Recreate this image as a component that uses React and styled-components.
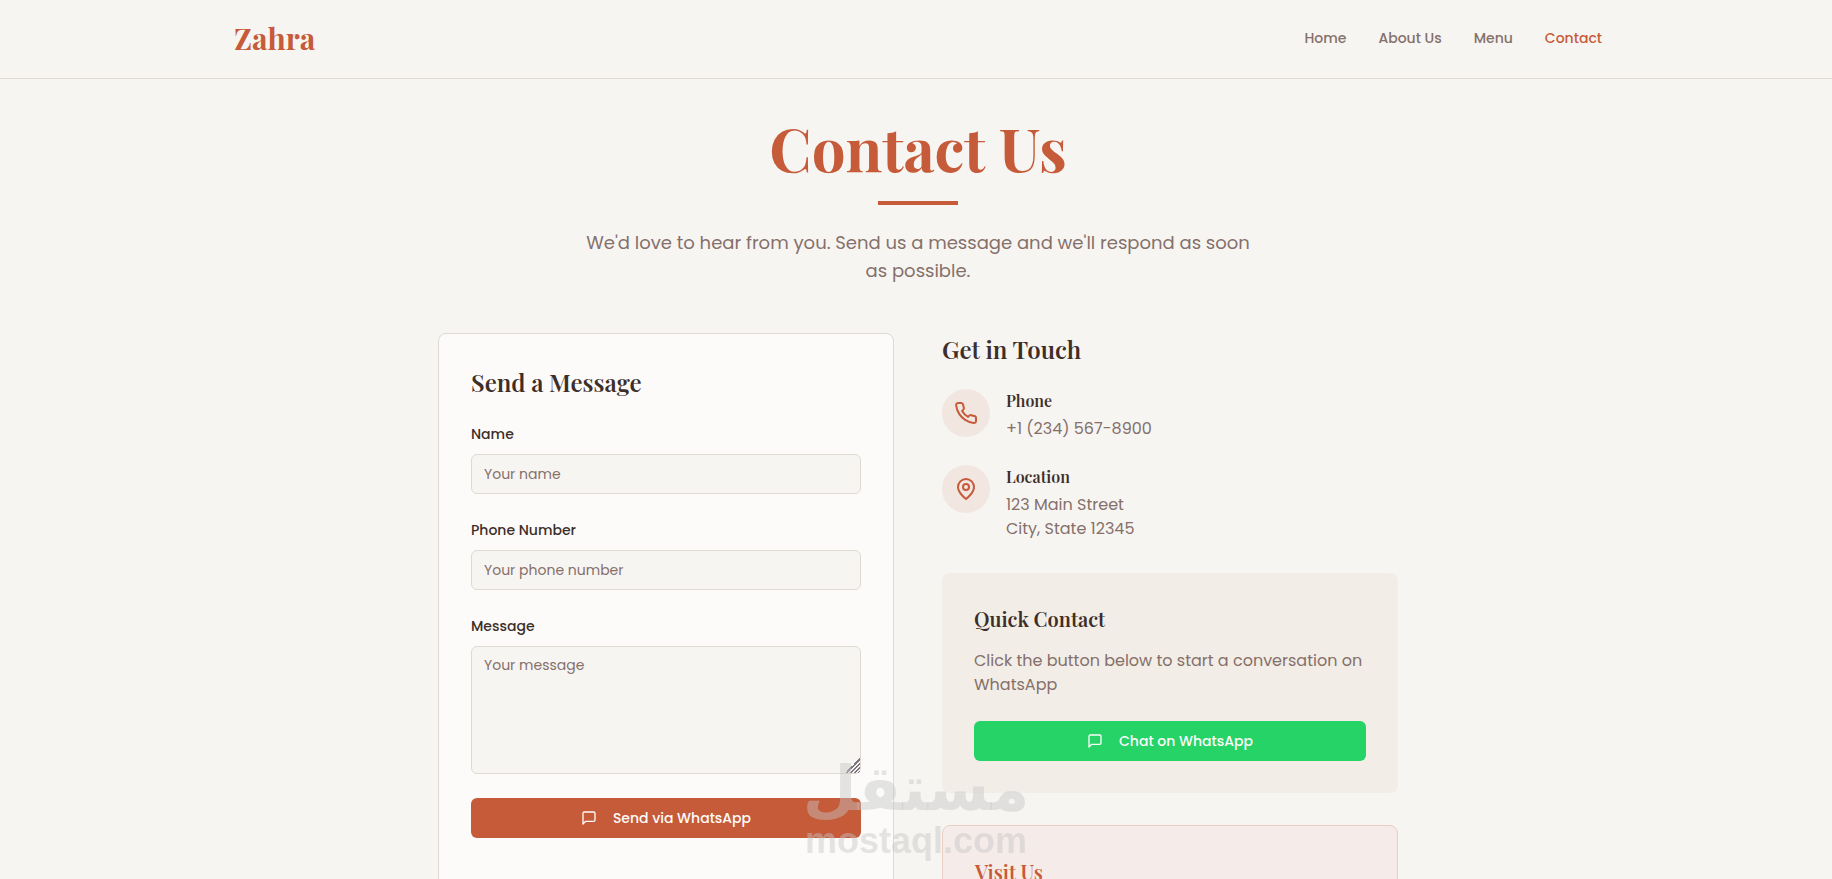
import { useState } from "react";
import styled, { createGlobalStyle } from "styled-components";

const links = ["Home", "About Us", "Menu", "Contact"];

function Icon({ size, children }) {
    return (
        <svg
            width={size}
            height={size}
            viewBox="0 0 24 24"
            fill="none"
            stroke="currentColor"
            strokeWidth="2"
            strokeLinecap="round"
            strokeLinejoin="round"
            aria-hidden="true"
        >
            {children}
        </svg>
    )
}

function MessageIcon() {
    return (
        <Icon size={16}>
            <path d="M21 15a2 2 0 0 1-2 2H7l-4 4V5a2 2 0 0 1 2-2h14a2 2 0 0 1 2 2z" />
        </Icon>
    )
}

function PhoneIcon() {
    return (
        <Icon size={24}>
            <path d="M22 16.92v3a2 2 0 0 1-2.18 2 19.79 19.79 0 0 1-8.63-3.07 19.5 19.5 0 0 1-6-6 19.79 19.79 0 0 1-3.07-8.67A2 2 0 0 1 4.11 2h3a2 2 0 0 1 2 1.72 12.84 12.84 0 0 0 .7 2.81 2 2 0 0 1-.45 2.11L8.09 9.91a16 16 0 0 0 6 6l1.27-1.27a2 2 0 0 1 2.11-.45 12.84 12.84 0 0 0 2.81.7A2 2 0 0 1 22 16.92z" />
        </Icon>
    )
}

function PinIcon() {
    return (
        <Icon size={24}>
            <path d="M20 10c0 6-8 12-8 12s-8-6-8-12a8 8 0 0 1 16 0Z" />
            <circle cx="12" cy="10" r="3" />
        </Icon>
    )
}

export default function App() {
    const [name, setName] = useState("");
    const [phone, setPhone] = useState("");
    const [message, setMessage] = useState("");

    return (
        <>
            <GlobalStyle />
            <Header>
                <HeaderContent>
                    <Logo href="#home">Zahra</Logo>
                    <Nav>
                        {links.map((link) => (
                            <NavLink key={link} href="#" $active={link === "Contact"}>{link}</NavLink>
                        ))}
                    </Nav>
                </HeaderContent>
            </Header>
            <Main>
                <Title>Contact Us</Title>
                <Divider />
                <Subtitle>
                    We'd love to hear from you. Send us a message and we'll respond as soon as possible.
                </Subtitle>
                <Columns>
                    <FormCard onSubmit={(e) => e.preventDefault()}>
                        <SectionTitle>Send a Message</SectionTitle>
                        <Field>
                            <Label htmlFor="name">Name</Label>
                            <Input
                                id="name"
                                value={name}
                                onChange={(e) => setName(e.target.value)}
                                placeholder="Your name"
                            />
                        </Field>
                        <Field>
                            <Label htmlFor="phone">Phone Number</Label>
                            <Input
                                id="phone"
                                type="tel"
                                value={phone}
                                onChange={(e) => setPhone(e.target.value)}
                                placeholder="Your phone number"
                            />
                        </Field>
                        <Field>
                            <Label htmlFor="message">Message</Label>
                            <TextArea
                                id="message"
                                value={message}
                                onChange={(e) => setMessage(e.target.value)}
                                placeholder="Your message"
                            />
                        </Field>
                        <Button type="submit">
                            <MessageIcon />
                            Send via WhatsApp
                        </Button>
                    </FormCard>
                    <Info>
                        <SectionTitle>Get in Touch</SectionTitle>
                        <Items>
                            <Item>
                                <IconCircle><PhoneIcon /></IconCircle>
                                <div>
                                    <ItemTitle>Phone</ItemTitle>
                                    <Text>+1 (234) 567-8900</Text>
                                </div>
                            </Item>
                            <Item>
                                <IconCircle><PinIcon /></IconCircle>
                                <div>
                                    <ItemTitle>Location</ItemTitle>
                                    <Text>123 Main Street<br />City, State 12345</Text>
                                </div>
                            </Item>
                        </Items>
                        <QuickCard>
                            <CardTitle>Quick Contact</CardTitle>
                            <Text>Click the button below to start a conversation on WhatsApp</Text>
                            <Button type="button" $whatsapp>
                                <MessageIcon />
                                Chat on WhatsApp
                            </Button>
                        </QuickCard>
                        <VisitCard>
                            <CardTitle $accent>Visit Us</CardTitle>
                        </VisitCard>
                    </Info>
                </Columns>
            </Main>
            <Watermark>
                <ArabicName lang="ar">مستقل</ArabicName>
                <LatinName>mostaql.com</LatinName>
            </Watermark>
        </>
    );
}

const serif = `"Playfair Display", "Liberation Serif", serif`;
const sans = `Poppins, Inter, sans-serif`;

const GlobalStyle = createGlobalStyle`
    * {
        box-sizing: border-box;
        margin: 0;
    }
    body {
        background-color: #f7f5f2;
        color: #3d2e29;
        font-family: ${sans};
        font-size: 16px;
        line-height: 24px;
    }
    button, input, textarea {
        font-family: inherit;
    }
`
const Header = styled.header`
    padding: 16px 16px 18px 20px;
    border-bottom: 1px solid #e0d9d1;
`
const HeaderContent = styled.div`
    max-width: 1368px;
    min-height: 44px;
    margin: 0 auto;
    display: flex;
    align-items: center;
    justify-content: space-between;
`
const Logo = styled.a`
    font-family: ${serif};
    font-size: 30px;
    line-height: 36px;
    font-weight: 700;
    color: #c65b3a;
    text-decoration: none;
`
const Nav = styled.nav`
    display: flex;
    gap: 32px;
`
const NavLink = styled.a`
    font-size: 14px;
    line-height: 20px;
    font-weight: 500;
    color: ${(props) => (props.$active ? "#c65b3a" : "#85706a")};
    text-decoration: none;
`
const Main = styled.main`
    padding: 38px 16px 64px 20px;
    display: flex;
    flex-direction: column;
    align-items: center;
`
const Title = styled.h1`
    font-family: ${serif};
    font-size: 60px;
    line-height: 60px;
    font-weight: 700;
    color: #c65b3a;
`
const Divider = styled.div`
    width: 80px;
    height: 4px;
    margin: 24px 0;
    background-color: #c65b3a;
`
const Subtitle = styled.p`
    max-width: 672px;
    font-size: 18px;
    line-height: 28px;
    text-align: center;
    color: #85706a;
`
const Columns = styled.div`
    width: 100%;
    max-width: 960px;
    margin-top: 48px;
    display: grid;
    grid-template-columns: 1fr 1fr;
    gap: 48px;
`
const FormCard = styled.form`
    padding: 32px;
    display: flex;
    flex-direction: column;
    gap: 24px;
    background-color: #fcfbf9;
    border: 1px solid #e0d9d1;
    border-radius: 8px;
`
const SectionTitle = styled.h2`
    font-family: ${serif};
    font-size: 24px;
    line-height: 32px;
    font-weight: 600;
`
const Field = styled.div`
    display: flex;
    flex-direction: column;
    gap: 8px;
`
const Label = styled.label`
    font-size: 14px;
    font-weight: 500;
`
const Input = styled.input`
    width: 100%;
    height: 40px;
    padding: 8px 12px;
    font-size: 14px;
    line-height: 20px;
    color: #3d2e29;
    background-color: #f7f5f2;
    border: 1px solid #e0d9d1;
    border-radius: 6px;

    &::placeholder {
        color: #85706a;
    }
`
const TextArea = styled(Input).attrs({ as: "textarea" })`
    height: 128px;
    display: block;
    resize: vertical;

    &::-webkit-resizer {
        background: linear-gradient(
            135deg,
            transparent 50%,
            #7d7480 50% 57%,
            transparent 57% 64%,
            #7d7480 64% 71%,
            transparent 71% 78%,
            #7d7480 78% 85%,
            transparent 85% 91%,
            #7d7480 91% 96%,
            transparent 96%
        );
    }
`
const Button = styled.button`
    width: 100%;
    height: 40px;
    display: flex;
    align-items: center;
    justify-content: center;
    gap: 16px;
    font-size: 14px;
    line-height: 20px;
    font-weight: 500;
    color: #fcfbf9;
    background-color: ${(props) => (props.$whatsapp ? "#25d366" : "#c65b3a")};
    border: none;
    border-radius: 6px;
    cursor: pointer;
`
const Info = styled.div`
    display: flex;
    flex-direction: column;
`
const Items = styled.div`
    margin: 24px 0 32px;
    display: flex;
    flex-direction: column;
    gap: 24px;
`
const Item = styled.div`
    display: flex;
    align-items: flex-start;
    gap: 16px;
`
const IconCircle = styled.div`
    width: 48px;
    height: 48px;
    display: flex;
    align-items: center;
    justify-content: center;
    color: #c65b3a;
    background-color: #f2e6e1;
    border-radius: 50%;
`
const ItemTitle = styled.h3`
    margin-bottom: 4px;
    font-family: ${serif};
    font-size: 16px;
    line-height: 24px;
    font-weight: 600;
`
const Text = styled.p`
    color: #85706a;
`
const QuickCard = styled.section`
    padding: 32px;
    background-color: #f2ede7;
    border-radius: 8px;

    ${Button} {
        margin-top: 24px;
    }
`
const CardTitle = styled.h3`
    margin-bottom: 16px;
    font-family: ${serif};
    font-size: 20px;
    line-height: 28px;
    font-weight: 600;
    color: ${(props) => (props.$accent ? "#c65b3a" : "#3d2e29")};
`
const VisitCard = styled.section`
    margin-top: 32px;
    padding: 32px;
    background-color: #f5ece9;
    border: 1px solid #ebcfc4;
    border-radius: 8px;
`
const Watermark = styled.div`
    position: fixed;
    left: 50%;
    bottom: 18px;
    transform: translateX(-50%);
    display: flex;
    flex-direction: column;
    align-items: center;
    font-weight: 700;
    color: rgba(198, 198, 198, 0.45);
    pointer-events: none;
`
const ArabicName = styled.span`
    font-family: "DejaVu Sans", sans-serif;
    font-size: 62px;
    line-height: 64px;
`
const LatinName = styled.span`
    font-family: "Liberation Sans", sans-serif;
    font-size: 36px;
    line-height: 40px;
`
